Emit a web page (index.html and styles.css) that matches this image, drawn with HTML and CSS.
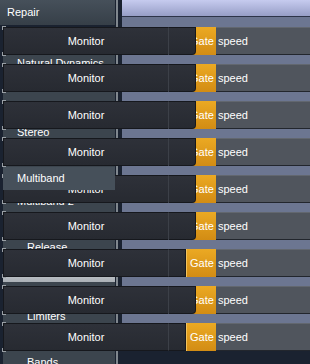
FILE: index.html
```html
<!DOCTYPE html>
<html lang="en">

<head>
    <meta charset="UTF-8">
    <meta name="viewport" content="width=device-width, initial-scale=1.0">
    <title>Repair - Monitor</title>
    <link rel="stylesheet" href="styles.css">
</head>

<body>
    <div class="screen">
        <div class="backdrop">
            <nav class="sidebar">
                <div class="sidebar-title">Repair</div>
                <ul class="menu">
                    <li class="menu-item">Dynamics</li>
                    <li class="menu-item">Natural Dynamics</li>
                    <li class="menu-item">Spectral</li>
                    <li class="menu-item">Exciter</li>
                    <li class="menu-item">Stereo</li>
                    <li class="menu-item">Imager</li>
                    <li class="menu-item hover">Multiband</li>
                    <li class="menu-item">Multiband 2</li>
                    <li class="menu-item sub">Attack</li>
                    <li class="menu-item sub">Release</li>
                    <li class="menu-item sub active">Knee</li>
                    <li class="menu-item sub">Ratio</li>
                    <li class="menu-item sub">Limiters</li>
                    <li class="menu-item sub">Threshold</li>
                    <li class="menu-item sub">Bands</li>
                </ul>
            </nav>
            <div class="rail"></div>
            <div class="main"></div>
        </div>

        <div class="rows">
            <div class="row">
                <div class="monitor">Monitor</div>
                <div class="knob"></div>
                <div class="gate">Gate</div>
                <div class="param">speed</div>
            </div>
            <div class="row">
                <div class="monitor">Monitor</div>
                <div class="knob"></div>
                <div class="gate">Gate</div>
                <div class="param">speed</div>
            </div>
            <div class="row">
                <div class="monitor">Monitor</div>
                <div class="knob"></div>
                <div class="gate">Gate</div>
                <div class="param">speed</div>
            </div>
            <div class="row">
                <div class="monitor">Monitor</div>
                <div class="knob"></div>
                <div class="gate">Gate</div>
                <div class="param">speed</div>
            </div>
            <div class="row">
                <div class="monitor">Monitor</div>
                <div class="knob"></div>
                <div class="gate">Gate</div>
                <div class="param">speed</div>
            </div>
            <div class="row">
                <div class="monitor">Monitor</div>
                <div class="knob"></div>
                <div class="gate">Gate</div>
                <div class="param">speed</div>
            </div>
            <div class="row open">
                <div class="monitor">Monitor</div>
                <div class="knob"></div>
                <div class="gate">Gate</div>
                <div class="param">speed</div>
            </div>
            <div class="row">
                <div class="monitor">Monitor</div>
                <div class="knob"></div>
                <div class="gate">Gate</div>
                <div class="param">speed</div>
            </div>
            <div class="row open">
                <div class="monitor">Monitor</div>
                <div class="knob"></div>
                <div class="gate">Gate</div>
                <div class="param">speed</div>
            </div>
        </div>
    </div>
</body>

</html>
```

FILE: styles.css
```css
* {
    box-sizing: border-box;
}

body {
    margin: 0;
    font-family: 'Liberation Sans', Arial, sans-serif;
    font-size: 11px;
    color: hsl(0, 0%, 100%);
    background: #1a2230;
}

.screen {
    display: grid;
    width: 310px;
    height: 364px;
    overflow: hidden;
}

.backdrop,
.rows {
    grid-area: 1 / 1;
}

/* sidebar + right panel behind the rows */
.backdrop {
    display: flex;
    height: 364px;
}

.sidebar {
    width: 116px;
}

.sidebar-title {
    height: 25px;
    line-height: 25px;
    padding-left: 7px;
    width: 115px;
    background: linear-gradient(180deg, #46505a 0%, #363f48 100%);
}

.menu {
    list-style: none;
    margin: 4px 0 0 0;
    padding: 0;
}

.menu-item {
    height: 23px;
    line-height: 23px;
    margin-left: 3px;
    width: 112px;
    padding-left: 14px;
    white-space: nowrap;
    overflow: hidden;
    background: #3c454e;
}

.menu-item.sub {
    padding-left: 24px;
}

.menu-item.hover {
    position: relative;
    z-index: 2;
    background: #46505a;
}

.menu-item.active {
    color: #222;
    background: linear-gradient(180deg, #eef0f2 0%, #a9afb5 100%);
}

.rail {
    width: 2px;
    background: #80878e;
    margin-right: 4px;
}

.main {
    flex: 1;
    background: linear-gradient(180deg,
            #c6cbef 0, #979ec6 16px,
            #2d3448 16px, #2d3448 17px,
            #6c7691 17px, #6c7691 351px,
            #1a2230 351px);
}

/* monitor rows */
.rows {
    display: flex;
    flex-direction: column;
    gap: 9px;
    padding: 27px 0 0 3px;
}

.row {
    position: relative;
    display: flex;
    height: 28px;
    line-height: 26px;
}

.row::before,
.row::after {
    content: "";
    position: absolute;
    left: -1px;
    width: 3px;
    height: 3px;
    border-left: 1px solid #9aa0a6;
}

.row::before {
    top: -1px;
    border-top: 1px solid #9aa0a6;
}

.row::after {
    bottom: -1px;
    border-bottom: 1px solid #9aa0a6;
}

.monitor {
    width: 165px;
    text-align: center;
    background: linear-gradient(180deg, #2e3139 0%, #272a31 100%);
    border: 1px solid #16181d;
    border-right: 0;
}

.knob {
    position: relative;
    z-index: 1;
    width: 28px;
    background: linear-gradient(180deg, #2e3139 0%, #272a31 100%);
    border: 1px solid #16181d;
    border-left-color: #3c4048;
    border-bottom-right-radius: 4px;
}

.gate {
    width: 30px;
    margin-left: -10px;
    padding-left: 3px;
    background: linear-gradient(180deg, #eba923 0%, #d28c14 100%);
    border-left: 1px solid #f2c35e;
    line-height: 28px;
}

.row.open .knob {
    width: 18px;
    border-bottom-right-radius: 0;
}

.row.open .gate {
    margin-left: 0;
}

.param {
    flex: 1;
    padding-left: 2px;
    background: #50555d;
    border-top: 1px solid #62676f;
    border-bottom: 1px solid #22262d;
}
```
